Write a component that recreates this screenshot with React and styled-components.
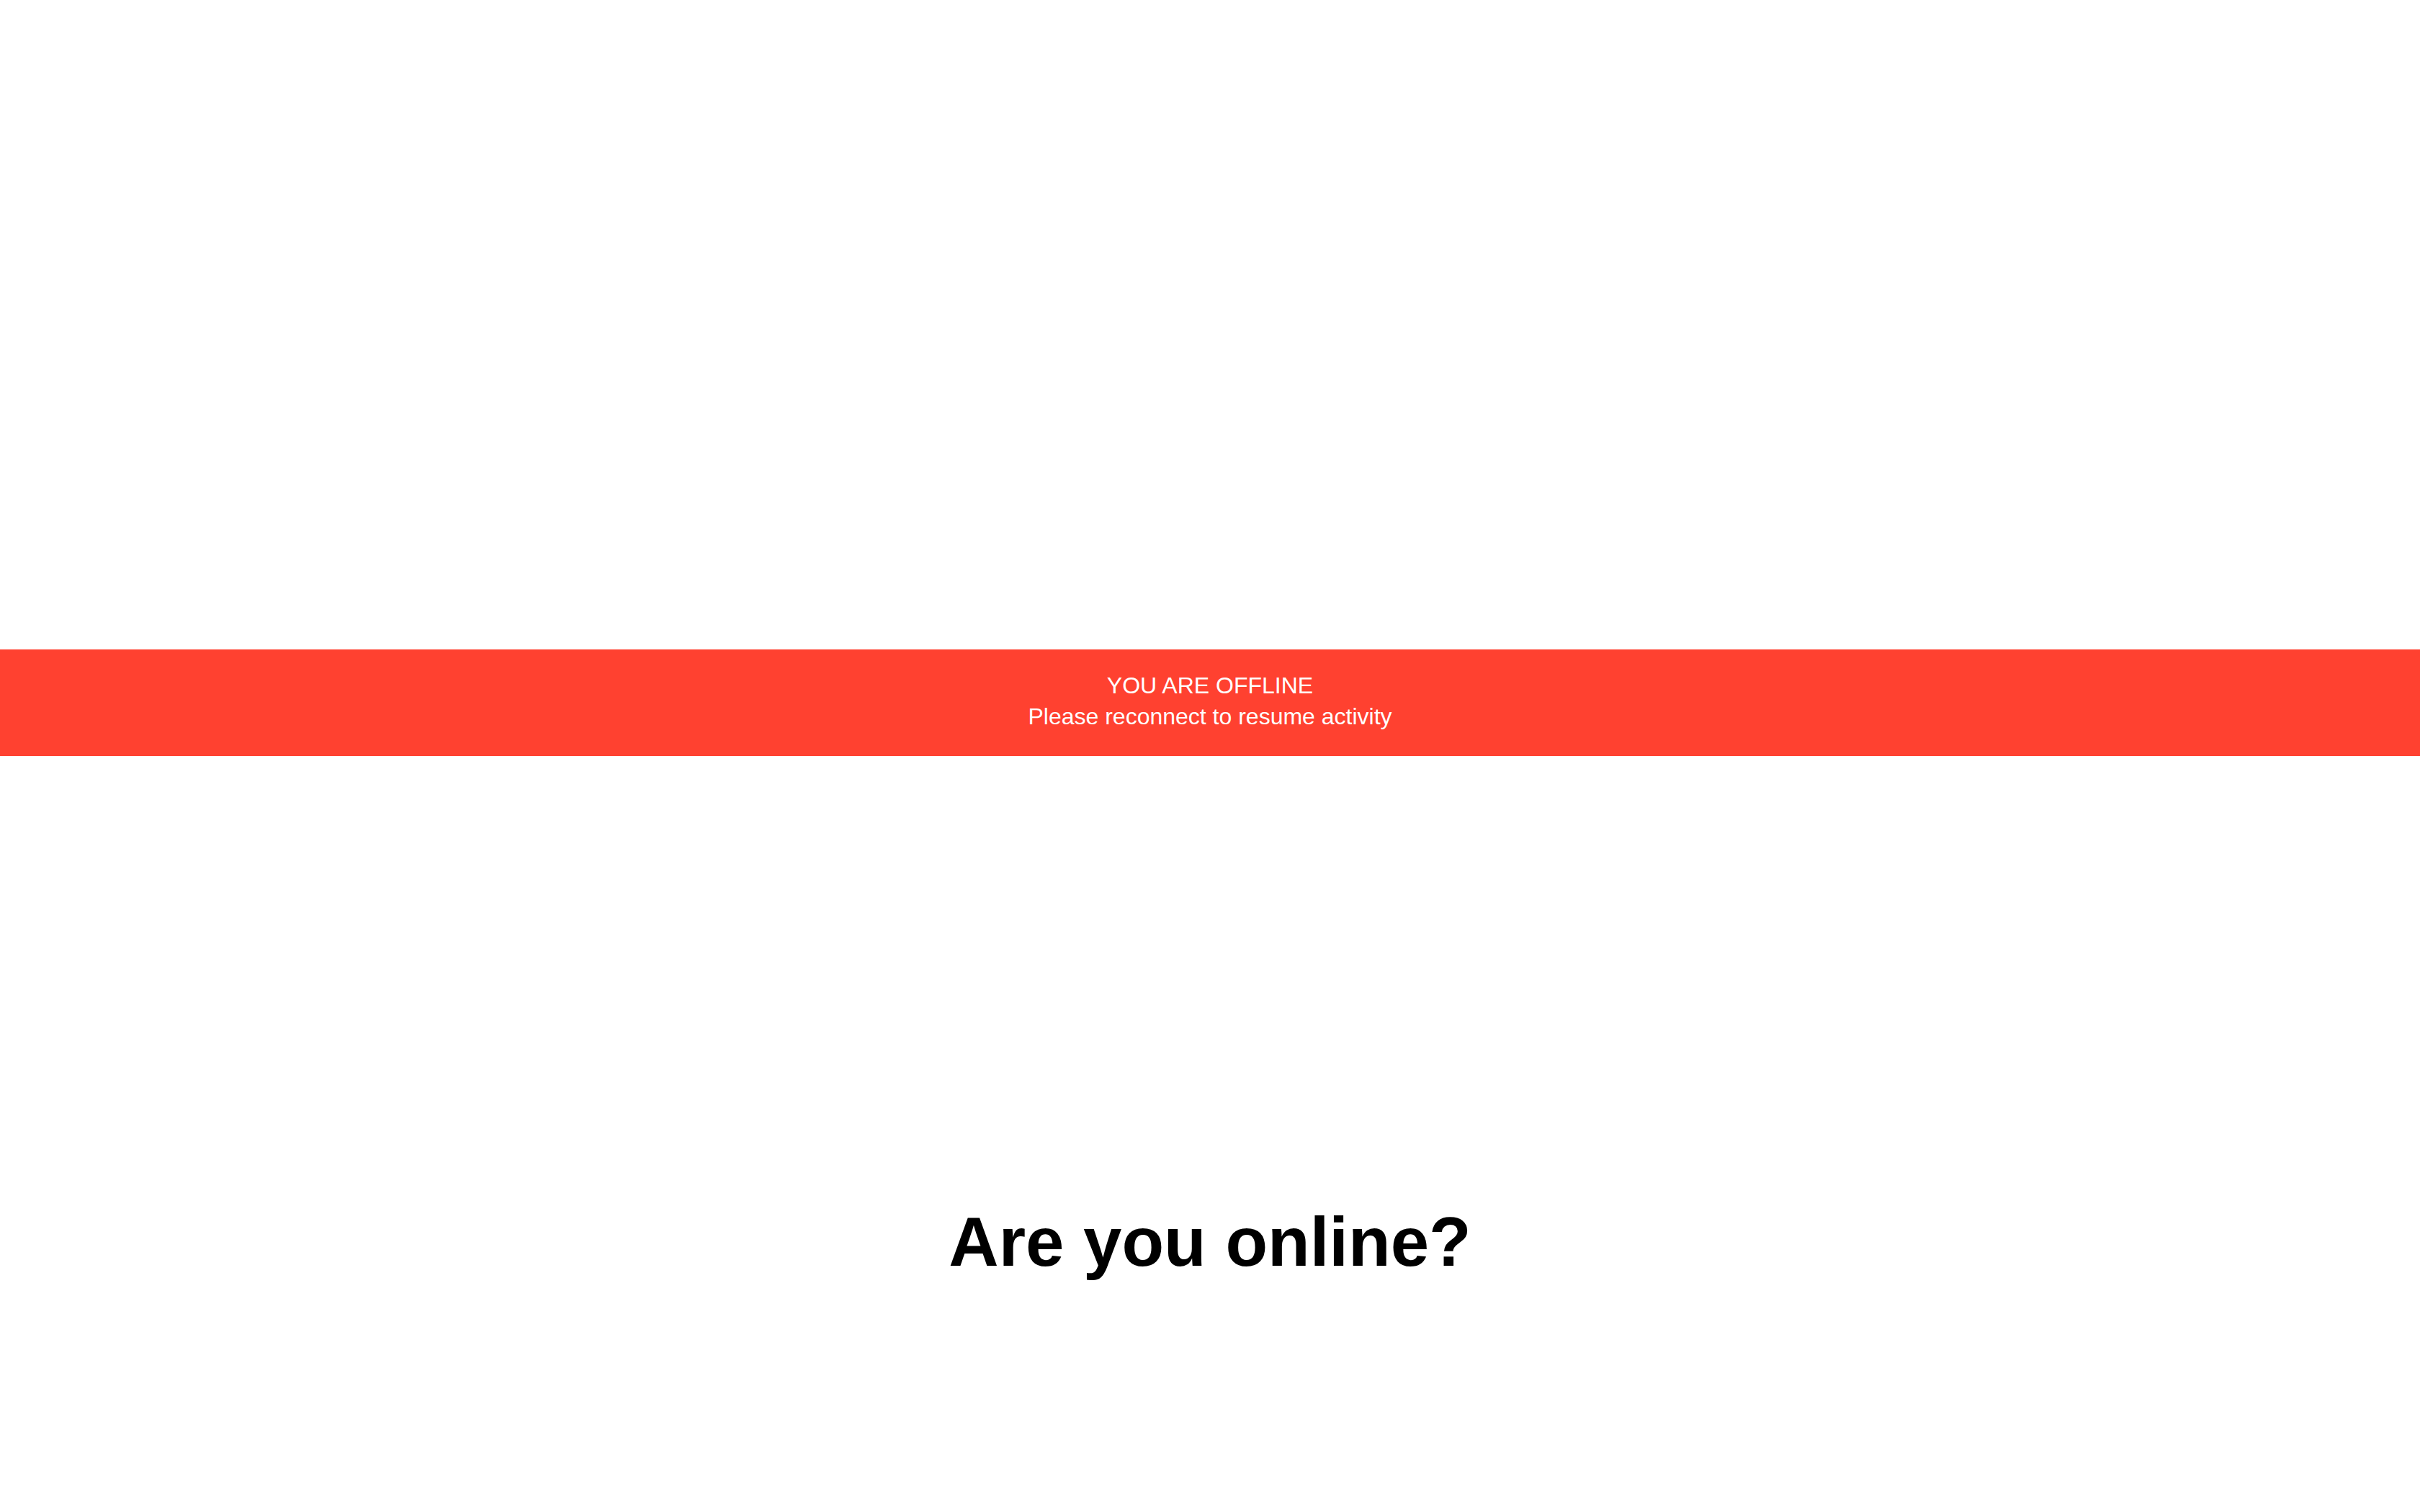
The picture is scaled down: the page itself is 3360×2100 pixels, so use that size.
import React from "react";
import styled, { createGlobalStyle } from "styled-components";

const Global = createGlobalStyle`
  html, body { margin: 0; padding: 0; background: #ffffff; }
  body { font-family: "Liberation Sans", Arial, Helvetica, sans-serif; }
`;

const Page = styled.div`
  min-height: 100vh;
  display: flex;
  flex-direction: column;
  padding-top: 902px;
  box-sizing: border-box;
`;

const Banner = styled.div`
  background: #ff4130;
  color: #ffffff;
  text-align: center;
  font-size: 32px;
  line-height: 43px;
  padding: 29px 0 33px;
`;

const BannerLine = styled.div`
  text-transform: ${(p) => (p.$caps ? "uppercase" : "none")};
`;

const Main = styled.main`
  display: flex;
  justify-content: center;
  padding-top: 620px;
`;

const Title = styled.h1`
  margin: 0;
  font-size: 96px;
  font-weight: 700;
  color: #000000;
  line-height: normal;
`;

export default function App() {
  return (
    <>
      <Global />
      <Page>
        <Banner>
          <BannerLine $caps>You are offline</BannerLine>
          <BannerLine>Please reconnect to resume activity</BannerLine>
        </Banner>
        <Main>
          <Title>Are you online?</Title>
        </Main>
      </Page>
    </>
  );
}
